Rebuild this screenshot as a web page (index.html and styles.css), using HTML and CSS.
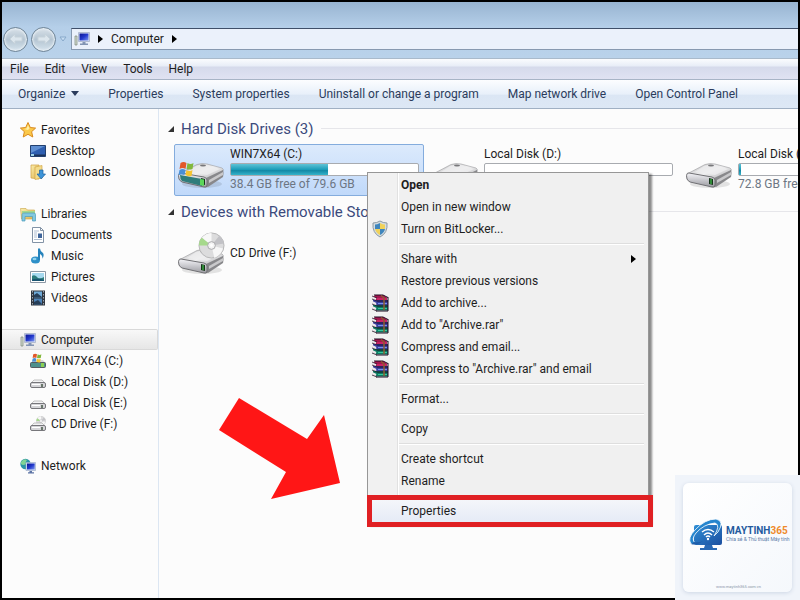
FILE: index.html
```
<!DOCTYPE html>
<html lang="en">
<head>
  <meta charset="UTF-8">
  <meta name="viewport" content="width=device-width, initial-scale=1.0">
  <title>Computer</title>
  <link rel="stylesheet" href="styles.css">
</head>
<body>
  <!-- Shared icons -->
  <svg class="sprite" aria-hidden="true">
    <defs>
      <linearGradient id="driveTop" x1="0" y1="0" x2="1" y2="1">
        <stop offset="0" stop-color="#b9b9bb"/>
        <stop offset="0.5" stop-color="#f0f0f1"/>
        <stop offset="1" stop-color="#a5a5a8"/>
      </linearGradient>
      <linearGradient id="driveFront" x1="0" y1="0" x2="0" y2="1">
        <stop offset="0" stop-color="#f4f4f8"/>
        <stop offset="1" stop-color="#9a9aa0"/>
      </linearGradient>
      <linearGradient id="screenBlue" x1="0" y1="0" x2="1" y2="1">
        <stop offset="0" stop-color="#0b1590"/>
        <stop offset="0.5" stop-color="#2238cc"/>
        <stop offset="1" stop-color="#7c98f0"/>
      </linearGradient>
      <linearGradient id="folder" x1="0" y1="0" x2="1" y2="1">
        <stop offset="0" stop-color="#fbefb0"/>
        <stop offset="1" stop-color="#dcae45"/>
      </linearGradient>
      <linearGradient id="logoBlue" x1="0" y1="0" x2="1" y2="1">
        <stop offset="0" stop-color="#2f8fd6"/>
        <stop offset="1" stop-color="#1c4fa0"/>
      </linearGradient>
    </defs>
    <symbol id="drive" viewBox="0 0 46 26">
      <ellipse cx="24" cy="21" rx="20" ry="4" fill="#000" opacity="0.1"/>
      <path d="M1 11L19 1.500Q24 0 29 1L44 5Q46 6 45 8L28 17L3 13Z" fill="url(#driveTop)" stroke="#9b9b9d" stroke-width="0.600"/>
      <path d="M18 3L26 1L42 6L29 12L9 9Z" fill="#eeeeef" opacity="0.800"/>
      <ellipse cx="25" cy="2.500" rx="3" ry="1" fill="#77777a"/>
      <path d="M28 15L45 7Q46 9 45 14L30 24Q28 24 27 22Z" fill="#88888b"/>
      <path d="M31 17L45 9V12L31 20Z" fill="#c9c9cb"/>
      <path d="M1 11Q0 12 1 16Q2 18 4 19L26 24Q29 25 29 22V17Q29 15 26 14L3 10Q1 10 1 11Z" fill="url(#driveFront)" stroke="#707074" stroke-width="1"/>
      <path d="M23 15L27 16V22L23 21Z" fill="#17351a"/>
      <path d="M25 16V21" stroke="#4ae254" stroke-width="1"/>
    </symbol>
    <symbol id="flag" viewBox="0 0 16 16">
      <path d="M2 2Q5 0 8 2L7 8Q4 6 1 8Z" fill="#e2582a"/>
      <path d="M9 2Q12 4 15 2L14 8Q11 9 8 8Z" fill="#82b83c"/>
      <path d="M1 9Q4 7 7 9L6 14Q3 13 0 14Z" fill="#4a8fd6"/>
      <path d="M8 9Q11 11 14 9L13 15Q10 16 7 14Z" fill="#f4c430"/>
    </symbol>
    <symbol id="disc" viewBox="0 0 28 28">
      <circle cx="14" cy="14" r="13" fill="#dcdcdd" stroke="#b5b5b6"/>
      <path d="M14 14L4 6Q8 1 14 1Z" fill="#f8f8f8"/>
      <path d="M14 14L1 14Q1 9 4 6Z" fill="#a6d98c"/>
      <path d="M14 14L26 17Q24 24 17 27Z" fill="#f7f7f7"/>
      <path d="M14 14L22 4Q26 8 27 12Z" fill="#c2c2c6"/>
      <circle cx="14" cy="14" r="4" fill="#f4f4f4" stroke="#a8a8aa"/>
      <circle cx="14" cy="14" r="1.500" fill="#fff"/>
    </symbol>
    <symbol id="computer" viewBox="0 0 16 16">
      <path d="M1 5H3V14H1Z" fill="#d3dccf" stroke="#7c8878" stroke-width="0.700"/>
      <path d="M4.500 1.500H15.500V10.500H4.500Z" fill="#dfe6f4" stroke="#a5b0c8" stroke-width="0.800"/>
      <path d="M5.500 2.500H14.500V9.500H5.500Z" fill="url(#screenBlue)"/>
      <path d="M8.500 11H11.500V12.500H14V14H6V12.500H8.500Z" fill="#8395b4"/>
    </symbol>
    <symbol id="minidrive" viewBox="0 0 16 16">
      <path d="M1 9L4 6H12L15 9Z" fill="#f3f3f4" stroke="#aaa" stroke-width="0.700"/>
      <rect x="0.500" y="8.500" width="15" height="5" rx="1.500" fill="#d5d5d8" stroke="#77777b"/>
      <path d="M2 10.500H10" stroke="#fff"/>
      <path d="M12 10V13" stroke="#445747" stroke-width="1.500"/>
    </symbol>
    <symbol id="rar" viewBox="0 0 18 18">
      <path d="M4 1H12L16 3.500V6.500H6L2 4Z" fill="#a3164f"/>
      <path d="M6 6H17V11H6L2 9V6Z" fill="#3a3fa0"/>
      <path d="M6 11H17V16.500H6L2 14V11Z" fill="#0c7a62"/>
      <path d="M6 4H16V6H6Z" fill="#c92463"/>
      <path d="M3 1H12L17 3.500M6 7H17M6 12H17M5 17H17M17 3V17" fill="none" stroke="#1e0a20"/>
      <path d="M1 3L5 5M1 8L5 10M1 13L5 15" stroke="#eee8ea" stroke-width="2"/>
      <path d="M1 2L6 4M1 5L6 7M1 10L6 12M1 15L6 17" stroke="#2a1428" stroke-width="0.800"/>
      <path d="M7 9.500H16" stroke="#7a92e8"/>
      <path d="M7 14.500H16" stroke="#37c69a"/>
      <path d="M10 1.500L13 4V16" fill="none" stroke="#8a5c30" stroke-width="1.500"/>
    </symbol>
  </svg>

  <div class="window">
    <header class="titlebar">
      <nav class="nav-buttons">
        <button type="button" class="round-btn" aria-label="Back">
          <svg viewBox="0 0 14 12"><path d="M6 1L1 6L6 11V8H13V4H6Z" fill="#dce6ed" stroke="#c6d2da"/></svg>
        </button>
        <button type="button" class="round-btn" aria-label="Forward">
          <svg viewBox="0 0 14 12"><path d="M8 1L13 6L8 11V8H1V4H8Z" fill="#dce6ed" stroke="#c6d2da"/></svg>
        </button>
        <button type="button" class="recent-btn" aria-label="Recent pages">
          <svg viewBox="0 0 8 6"><path d="M1 1H7L4 5Z" fill="#c8def3" stroke="#88a9ca"/></svg>
        </button>
      </nav>
      <div class="address">
        <svg class="icon"><use href="#computer"/></svg>
        <svg class="crumb-arrow" viewBox="0 0 5 8"><path d="M0 0L5 4L0 8Z"/></svg>
        <a href="#">Computer</a>
        <svg class="crumb-arrow" viewBox="0 0 5 8"><path d="M0 0L5 4L0 8Z"/></svg>
      </div>
    </header>

    <nav class="menubar">
      <button type="button">File</button>
      <button type="button">Edit</button>
      <button type="button">View</button>
      <button type="button">Tools</button>
      <button type="button">Help</button>
    </nav>

    <div class="toolbar">
      <button type="button">Organize <svg class="caret" viewBox="0 0 8 5"><path d="M0 0H8L4 5Z"/></svg></button>
      <button type="button">Properties</button>
      <button type="button">System properties</button>
      <button type="button">Uninstall or change a program</button>
      <button type="button">Map network drive</button>
      <button type="button">Open Control Panel</button>
    </div>

    <div class="content">
      <aside class="sidebar">
        <ul class="tree">
          <li><a href="#">
            <svg class="icon" viewBox="0 0 16 16"><path d="M8 0.500L10.300 5.500L15.600 6.100L11.600 9.700L12.800 15L8 12.300L3.200 15L4.400 9.700L0.400 6.100L5.700 5.500Z" fill="#fbc94a" stroke="#d98a1e"/><path d="M8 3L9.500 6.500L8 8L4 7L6.500 6.500Z" fill="#fff0a8"/></svg>
            Favorites</a></li>
          <li class="child"><a href="#">
            <svg class="icon" viewBox="0 0 16 16"><path d="M0.500 2.500H15.500V13.500H0.500Z" fill="#2f5fb0" stroke="#23406e"/><path d="M1 3H15L1 10Z" fill="#5f8fd2"/><path d="M1 11.500H15V13H1Z" fill="#1c3358"/><path d="M1 11H4V13H1Z" fill="#9fd4ea"/></svg>
            Desktop</a></li>
          <li class="child"><a href="#">
            <svg class="icon" viewBox="0 0 16 16"><path d="M1 1H9V15L1 14Z" fill="url(#folder)" stroke="#cf9f3c" stroke-width="0.700"/><path d="M5 3L12 1.500V14L5 15.500Z" fill="#f4dc8a" stroke="#d2a648" stroke-width="0.700"/><path d="M9.500 6H13V10H15.500L11.200 15L7 10H9.500Z" fill="#3d94d8" stroke="#1e619f" stroke-width="0.700"/></svg>
            Downloads</a></li>
        </ul>
        <ul class="tree">
          <li><a href="#">
            <svg class="icon" viewBox="0 0 16 16"><path d="M0.500 2.500H6L7.500 4H14.500V13H1.500Z" fill="url(#folder)" stroke="#cfae58" stroke-width="0.700"/><path d="M2 5H15V7H2Z" fill="#a5d88d"/><path d="M2 15V8.500Q2 7 4 7H14Q15.500 7 15.500 8.500V15H12.500V10.500H5V15Z" fill="#83c8df" stroke="#4c9cbb" stroke-width="0.700"/></svg>
            Libraries</a></li>
          <li class="child"><a href="#">
            <svg class="icon" viewBox="0 0 16 16"><path d="M2.500 0.500H10.500L13.500 3.500V15.500H2.500Z" fill="#fff" stroke="#8393a6"/><path d="M4 4H9M4 6H7M4 8H7M4 10H7M4 12.500H12" stroke="#b0bfd2"/><path d="M8 6.500H12V11H8Z" fill="#3f659b"/><path d="M10.500 0.500V3.500H13.500" fill="none" stroke="#8393a6"/></svg>
            Documents</a></li>
          <li class="child"><a href="#">
            <svg class="icon" viewBox="0 0 16 16"><ellipse cx="5.500" cy="12" rx="4.500" ry="3.500" fill="#2e90c8"/><ellipse cx="4.500" cy="11" rx="2" ry="1.200" fill="#90d2ee"/><path d="M8 12V0.500H10Q10 3 13 5Q14.500 7 12.500 11Q13 7.500 10 6V12Z" fill="#2683bc"/></svg>
            Music</a></li>
          <li class="child"><a href="#">
            <svg class="icon" viewBox="0 0 16 16"><path d="M0.500 2.500H15.500V13.500H0.500Z" fill="#fff" stroke="#8c98a5"/><path d="M2 4H14V12H2Z" fill="#a6d9ef"/><path d="M2 7Q5 5 8 9Q11 10 14 8V12H2Z" fill="#2c7c7c"/><path d="M2 10.500Q8 9 14 11V12H2Z" fill="#185470"/></svg>
            Pictures</a></li>
          <li class="child"><a href="#">
            <svg class="icon" viewBox="0 0 16 16"><path d="M1 0.500H15V15.500H1Z" fill="#30363f"/><path d="M4 1.500H12V7.500H4Z" fill="#6faad8"/><path d="M4 8.500H12V14.500H4Z" fill="#4d83b8"/><path d="M4 5L7 3L12 7V7.500H4ZM4 12L8 10L12 14V14.500H4Z" fill="#263e58"/><path d="M2.500 1V15M13.500 1V15" stroke="#9aa4b0" stroke-dasharray="1.500 1.500"/></svg>
            Videos</a></li>
        </ul>
        <ul class="tree">
          <li class="current"><a href="#"><svg class="icon"><use href="#computer"/></svg>Computer</a></li>
          <li class="child"><a href="#">
            <svg class="icon" viewBox="0 0 16 16"><path d="M1 10L4 7H13L15.500 10Z" fill="#d9d9db"/><rect x="0.500" y="9.500" width="15" height="5" rx="1" fill="#4d908c" stroke="#555b60"/><path d="M11 10H14V14H11Z" fill="#8ad052"/><use href="#flag" x="2" y="0" width="10" height="10"/></svg>
            WIN7X64 (C:)</a></li>
          <li class="child"><a href="#"><svg class="icon"><use href="#minidrive"/></svg>Local Disk (D:)</a></li>
          <li class="child"><a href="#"><svg class="icon"><use href="#minidrive"/></svg>Local Disk (E:)</a></li>
          <li class="child"><a href="#">
            <svg class="icon" viewBox="0 0 16 16"><use href="#disc" x="6" y="0" width="10" height="10"/><use href="#minidrive" x="0" y="1" width="16" height="16"/></svg>
            CD Drive (F:)</a></li>
        </ul>
        <ul class="tree">
          <li><a href="#">
            <svg class="icon" viewBox="0 0 16 16"><circle cx="5.500" cy="6" r="5.200" fill="#2a93a9"/><path d="M1 4Q4 0 7 2Q5 4 6 6Q3 8 1 6Z" fill="#7fd394"/><path d="M6 4.500H15.500V12.500H6Z" fill="#dbe5f6" stroke="#94a5c4" stroke-width="0.600"/><path d="M7 5.500H14.700V11.500H7Z" fill="url(#screenBlue)"/><path d="M9.500 13H12V14.200H14V15.500H8V14.200H9.500Z" fill="#5c73a4"/></svg>
            Network</a></li>
        </ul>
      </aside>

      <main class="files">
        <h2 class="group-title"><svg class="expander" viewBox="0 0 6 6"><path d="M6 0V6H0Z"/></svg>Hard Disk Drives (3)</h2>
        <div class="tiles">
          <div class="tile selected">
            <svg class="tile-icon" viewBox="0 0 46 44"><use href="#drive" x="0" y="15" width="46" height="26"/><path d="M2 27L24 31V38L4 33Q2 31 2 27Z" fill="#2f7d7b"/><path d="M22 31L26 32V38L22 37Z" fill="#5cd65a"/><use href="#flag" x="0" y="13" width="17" height="16"/></svg>
            <div class="tile-info">
              <span class="tile-name">WIN7X64 (C:)</span>
              <div class="bar"><div class="bar-fill" style="width: 52%"></div></div>
              <span class="tile-size">38.4 GB free of 79.6 GB</span>
            </div>
          </div>
          <div class="tile">
            <svg class="tile-icon" viewBox="0 0 46 44"><use href="#drive" x="0" y="15" width="46" height="26"/></svg>
            <div class="tile-info">
              <span class="tile-name">Local Disk (D:)</span>
              <div class="bar"></div>
            </div>
          </div>
          <div class="tile">
            <svg class="tile-icon" viewBox="0 0 46 44"><use href="#drive" x="0" y="15" width="46" height="26"/></svg>
            <div class="tile-info">
              <span class="tile-name">Local Disk (E:)</span>
              <div class="bar"><div class="bar-fill" style="width: 1%"></div></div>
              <span class="tile-size">72.8 GB free</span>
            </div>
          </div>
        </div>

        <h2 class="group-title"><svg class="expander" viewBox="0 0 6 6"><path d="M6 0V6H0Z"/></svg>Devices with Removable Storage (1)</h2>
        <div class="tiles">
          <div class="tile">
            <svg class="tile-icon" viewBox="0 0 46 44"><use href="#drive" x="0" y="18" width="46" height="26"/><use href="#disc" x="20" y="1" width="27" height="27"/></svg>
            <div class="tile-info">
              <span class="tile-name">CD Drive (F:)</span>
            </div>
          </div>
        </div>
      </main>
    </div>
  </div>

  <div class="context-menu" role="menu">
    <button type="button" role="menuitem" class="default">Open</button>
    <button type="button" role="menuitem">Open in new window</button>
    <button type="button" role="menuitem">
      <svg class="menu-icon" viewBox="0 0 18 18"><path d="M9 1Q12 3 16 3Q17 13 9 17Q1 13 2 3Q6 3 9 1Z" fill="#d5dde2" stroke="#8c9aa3"/><path d="M9 3Q6 4.500 4 4.500V9H9Z" fill="#3f86bd"/><path d="M9 3Q12 4.500 14 4.500V9H9Z" fill="#f0d25a"/><path d="M4 9Q5 13 9 15V9Z" fill="#f0d25a"/><path d="M14 9Q13 13 9 15V9Z" fill="#3f86bd"/></svg>
      Turn on BitLocker...</button>
    <hr>
    <button type="button" role="menuitem">Share with <svg class="submenu-arrow" viewBox="0 0 5 8"><path d="M0 0L5 4L0 8Z"/></svg></button>
    <button type="button" role="menuitem">Restore previous versions</button>
    <button type="button" role="menuitem"><svg class="menu-icon"><use href="#rar"/></svg>Add to archive...</button>
    <button type="button" role="menuitem"><svg class="menu-icon"><use href="#rar"/></svg>Add to "Archive.rar"</button>
    <button type="button" role="menuitem"><svg class="menu-icon"><use href="#rar"/></svg>Compress and email...</button>
    <button type="button" role="menuitem"><svg class="menu-icon"><use href="#rar"/></svg>Compress to "Archive.rar" and email</button>
    <hr>
    <button type="button" role="menuitem">Format...</button>
    <hr>
    <button type="button" role="menuitem">Copy</button>
    <hr>
    <button type="button" role="menuitem">Create shortcut</button>
    <button type="button" role="menuitem">Rename</button>
    <hr>
    <div class="callout">
      <button type="button" role="menuitem">Properties</button>
    </div>
  </div>

  <svg class="pointer" viewBox="0 0 124 104"><path d="M21 1L89 42L106 18L122 86L53 102L68 75L1 33Z" fill="#ff1616"/></svg>

  <div class="watermark">
    <div class="card">
      <div class="brand">
        <svg class="logo" viewBox="0 0 36 36">
          <path d="M7 9H31Q33 9 33 11V27Q33 29 31 29H7Q5 29 5 27V11Q5 9 7 9Z" fill="url(#logoBlue)"/>
          <path d="M16 29H23L24 32H28V34H11V32H15Z" fill="#2868b4"/>
          <path d="M2 28Q-2 22 6 14Q16 3 27 3Q36 5 29 16L25 20Q32 9 26 7Q15 8 7 17Q2 23 6 27Z" fill="#2585ce" stroke="#fff" stroke-width="0.800"/>
          <path d="M2 28Q8 30 14 25Q10 27 5 26Z" fill="#1e5ca8"/>
          <path d="M13 16Q19 11 25 16M15 19Q19 15 23 19M17 21Q19 19 21 21" fill="none" stroke="#fff" stroke-width="1.500"/>
          <circle cx="19" cy="23" r="1.200" fill="#fff"/>
        </svg>
        <div class="brand-text">
          <strong>MAYTINH<em>365</em></strong>
          <span>Chia sẻ &amp; Thủ thuật Máy tính</span>
        </div>
      </div>
      <small>www.maytinh365.com.vn</small>
    </div>
  </div>
</body>
</html>
```
FILE: styles.css
```
* {
  margin: 0;
  padding: 0;
  box-sizing: border-box;
}
body {
  font-family: Roboto, "Open Sans", sans-serif;
  font-size: 12px;
  color: #1e1e1e;
  background: #000;
  overflow: hidden;
}
button {
  font: inherit;
  color: inherit;
  background: none;
  border: none;
  white-space: nowrap;
}
a {
  color: inherit;
  text-decoration: none;
}
.sprite {
  position: absolute;
  width: 0;
  height: 0;
}
.icon {
  width: 16px;
  height: 16px;
  flex: none;
}
.window {
  display: flex;
  flex-direction: column;
  height: 100vh;
  border: 2px solid #000;
  background: #fcfcfc;
  overflow: hidden;
}

/* Title and address bar */
.titlebar {
  display: flex;
  align-items: center;
  gap: 2px;
  padding: 26px 0 8px 1px;
  background: linear-gradient(#98b4d1, #b5cfe9 45%, #b9d2ea);
}
.nav-buttons {
  display: flex;
  align-items: center;
  gap: 3px;
  height: 22px;
}
.round-btn {
  display: flex;
  align-items: center;
  justify-content: center;
  width: 25px;
  height: 25px;
  border: 1px solid #6f8496;
  border-radius: 50%;
  background: linear-gradient(#d9e2e9, #b5c5d2 50%, #d5e3ed);
  box-shadow: inset 0 0 2px 1px #eaf1f6;
}
.round-btn svg {
  width: 14px;
  height: 12px;
}
.recent-btn {
  display: flex;
  align-items: center;
  width: 10px;
}
.recent-btn svg {
  width: 8px;
  height: 6px;
}
.address {
  display: flex;
  flex: 1;
  align-items: center;
  gap: 8px;
  height: 22px;
  padding-left: 2px;
  border: 1px solid #8799b0;
  border-top-color: #3f4f69;
  border-right: none;
  background: #ebf1fb;
}
.crumb-arrow {
  width: 5px;
  height: 8px;
}

/* Menus */
.menubar {
  display: flex;
  align-items: center;
  gap: 16px;
  height: 21px;
  padding-left: 8px;
  border-top: 1px solid #a9bacb;
  background: linear-gradient(#fafcfe, #e8edf7 35%, #d5daeb 40%, #e0e2f2);
}
.toolbar {
  display: flex;
  align-items: center;
  gap: 29px;
  height: 30px;
  padding-left: 16px;
  border-top: 1px solid #a8b4c6;
  border-bottom: 1px solid #a0b0c3;
  background: linear-gradient(#fcfdff, #e8f0fa 50%, #dbe6f4 55%, #dde8f5);
  color: #2b3c5c;
}
.caret {
  width: 8px;
  height: 5px;
  margin-left: 3px;
  vertical-align: 2px;
  fill: #2b3c5c;
}

/* Navigation tree */
.content {
  display: flex;
  flex: 1;
  min-height: 0;
}
.sidebar {
  display: flex;
  flex: none;
  flex-direction: column;
  gap: 21px;
  width: 157px;
  padding-top: 10px;
  border-right: 1px solid #dce6f2;
}
.tree {
  list-style: none;
}
.tree a {
  display: flex;
  align-items: center;
  gap: 5px;
  height: 21px;
  padding-left: 18px;
}
.tree .child a {
  padding-left: 28px;
}
.tree .current a {
  border: 1px solid #d9d9d9;
  border-left: none;
  border-radius: 0 2px 2px 0;
  background: linear-gradient(#f8f8f8, #e6e6e6);
}

/* Drive list */
.files {
  flex: 1;
  min-width: 0;
  padding: 9px 0 0 9px;
  overflow: hidden;
}
.group-title {
  display: flex;
  align-items: center;
  gap: 7px;
  height: 21px;
  font-size: 15px;
  font-weight: normal;
  color: #3b4a7c;
  white-space: nowrap;
}
.group-title::after {
  content: "";
  flex: 1;
  height: 1px;
  background: #e6e6ea;
}
.expander {
  width: 6px;
  height: 6px;
  fill: #333;
}
.tiles {
  display: flex;
  gap: 4px;
  padding: 5px 0 5px 6px;
}
.tile {
  display: flex;
  flex: none;
  align-items: center;
  gap: 5px;
  width: 250px;
  height: 52px;
  padding: 0 4px 0 2px;
  border: 1px solid transparent;
  border-radius: 2px;
}
.tile.selected {
  border-color: #84acdd;
  background: linear-gradient(#dceafc, #c0d9fa);
}
.tile-icon {
  width: 48px;
  height: 44px;
  flex: none;
}
.tile-info {
  flex: 1;
  align-self: center;
  height: 48px;
  min-width: 0;
  white-space: nowrap;
}
.tile-name,
.tile-size {
  display: block;
  line-height: 17px;
}
.tile-size {
  color: #6d7683;
}
.tile-info > :only-child {
  line-height: 48px;
}
.bar {
  height: 13px;
  border: 1px solid #a8abb0;
  border-radius: 2px;
  background: #fff;
}
.bar-fill {
  height: 100%;
  background: linear-gradient(#5fc3d6, #1c9db9 50%, #1489a6 60%, #35b3cb);
}

/* Context menu */
.context-menu {
  position: absolute;
  top: 172px;
  left: 367px;
  width: 282px;
  padding: 1px 2px;
  border: 1px solid #979797;
  background: linear-gradient(90deg, #f1f1f1 29px, #e1e1e1 29px, #e1e1e1 30px, #fff 30px, #fff 31px, #f0f0f0 31px);
  box-shadow: 3px 2px 2px rgba(0, 0, 0, 0.45);
}
.context-menu button {
  display: flex;
  align-items: center;
  position: relative;
  width: 100%;
  height: 22px;
  padding-left: 31px;
  text-align: left;
}
.context-menu .default {
  font-weight: bold;
}
.context-menu hr {
  height: 2px;
  margin: 3px 2px 3px 29px;
  border: none;
  border-top: 1px solid #dedede;
  background: #fff;
}
.menu-icon {
  position: absolute;
  left: 1px;
  width: 18px;
  height: 18px;
}
.submenu-arrow {
  width: 5px;
  height: 8px;
  margin-left: auto;
  margin-right: 10px;
}

/* Red frame round the entry to click */
.callout {
  margin: -5px -7px -5px -3px;
  border: 5px solid #e02023;
  background: linear-gradient(#f4f6fa, #e5ebf6);
}
.callout button {
  padding-left: 29px;
}

/* Arrow pointing at Properties */
.pointer {
  position: absolute;
  top: 397px;
  left: 218px;
  width: 124px;
  height: 104px;
}

/* Site badge */
.watermark {
  position: absolute;
  right: 0;
  bottom: 0;
  width: 125px;
  height: 125px;
  padding: 8px;
  background: #f0f4fa;
}
.card {
  display: flex;
  flex-direction: column;
  height: 100%;
  padding: 0 4px 2px 6px;
  border-radius: 6px;
  background: linear-gradient(135deg, #fff, #f5f8fc);
  box-shadow: 0 1px 4px #ccd6e4;
}
.brand {
  display: flex;
  flex: 1;
  align-items: center;
  gap: 1px;
}
.logo {
  width: 36px;
  height: 36px;
  flex: none;
}
.brand-text {
  display: flex;
  flex-direction: column;
  white-space: nowrap;
}
.brand-text strong {
  font-size: 10px;
  line-height: 11px;
  color: #245a9e;
}
.brand-text em {
  font-style: normal;
  color: #ef8a2b;
}
.brand-text span {
  font-size: 5px;
  line-height: 6px;
  color: #5a7ba8;
}
.card small {
  font-size: 4px;
  line-height: 6px;
  text-align: center;
  color: #8a97a8;
}
```
